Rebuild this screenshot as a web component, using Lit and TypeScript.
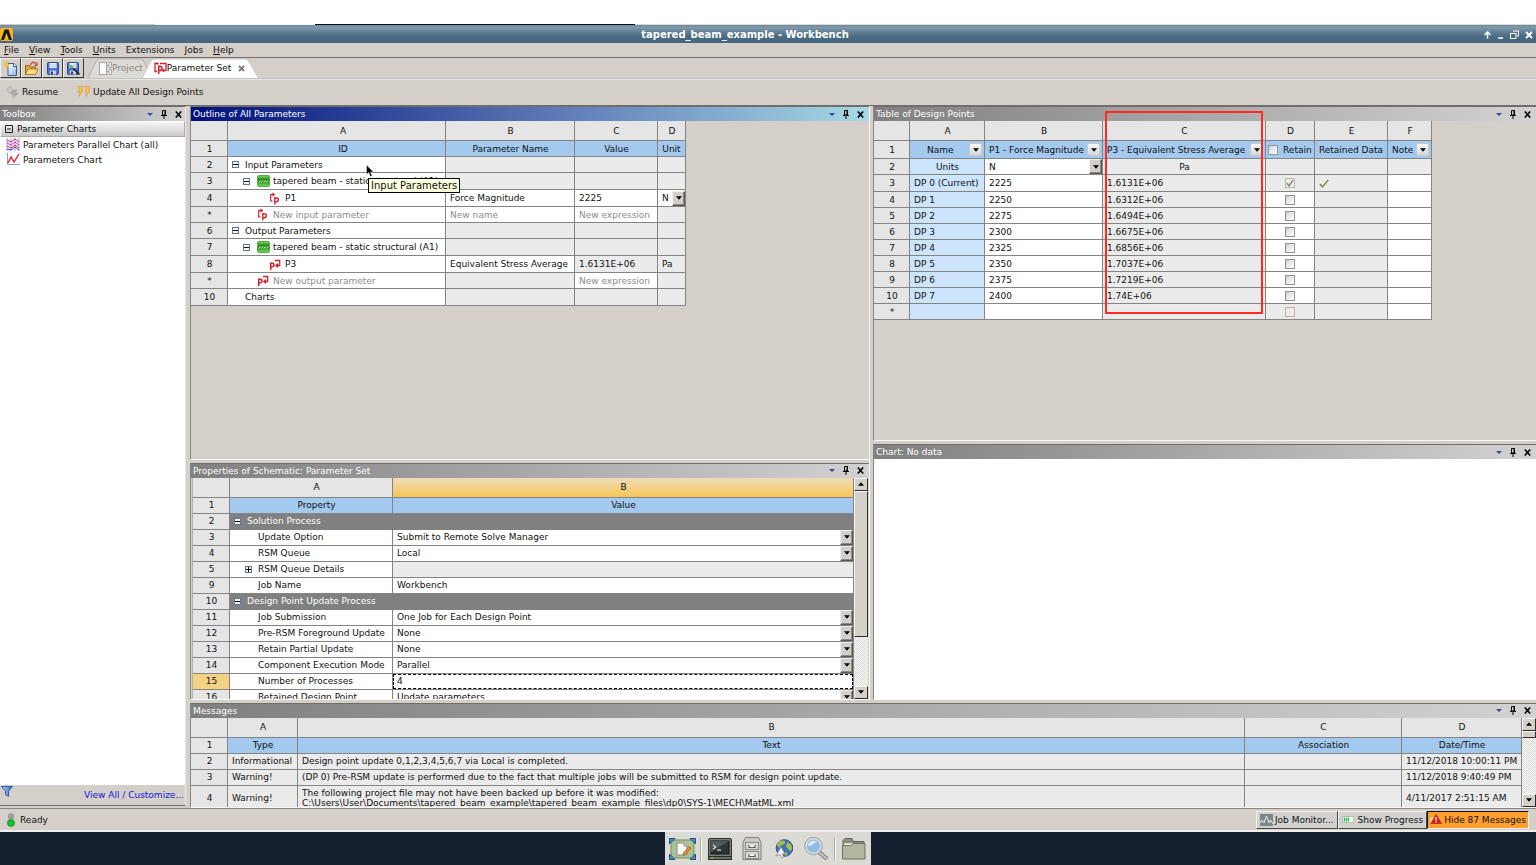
import { LitElement, html, svg, css, nothing, TemplateResult } from "lit";
import { customElement, state } from "lit/decorators.js";
import { classMap } from "lit/directives/class-map.js";

type Tpl = TemplateResult | string | typeof nothing;

const pic = (w: number, h: number, body: unknown, cls = "") =>
  html`<svg class=${cls} width=${w} height=${h} viewBox="0 0 ${w} ${h}" aria-hidden="true">${body}</svg>`;

const arrow = (up = false) =>
  pic(7, 4, up ? svg`<path d="M0 4 3.5 0 7 4z" fill="#000"/>` : svg`<path d="M0 0h7L3.5 4z" fill="#000"/>`);

const paramIn = pic(13, 13, svg`
  <path d="M4 2.500H1.700v6.500h2" fill="none" stroke="#d3202c" stroke-width="1.200"/>
  <path d="M3.500 .3v4.400L6.300 2.500z" fill="#d3202c"/>
  <path d="M5.800 5v7.500M6 6.200c4.500-1.500 4.500 4.300 0 3.600" fill="none" stroke="#d3202c" stroke-width="1.400"/>`);
const paramOut = pic(13, 13, svg`
  <path d="M1.700 4.500V12M2 5.500c4-1.500 4 4 0 3.500" fill="none" stroke="#d3202c" stroke-width="1.500"/>
  <path d="M6 2.500h4.700v5H8" fill="none" stroke="#d3202c" stroke-width="1.300"/>
  <path d="M9 5v5L5.800 7.500z" fill="#d3202c"/>`);
const paramSet = pic(13, 13, svg`
  <path d="M4 1.500H1v8h2M6 1.500h6v7H9" fill="none" stroke="#d3202c" stroke-width="1.300"/>
  <path d="M4.700 3.500V12M5 4.500c4-1.500 4 4.500 0 4" fill="none" stroke="#d3202c" stroke-width="1.500"/>
  <path d="M3 0v3l2-1.500zM10 6.500v4L7.500 8.500z" fill="#d3202c"/>`);
const systemIcon = pic(13, 12, svg`
  <defs><linearGradient id="sys" x2="0" y2="1"><stop stop-color="#7fdc62"/><stop offset=".35" stop-color="#2c8a22"/><stop offset=".6" stop-color="#2f9424"/><stop offset="1" stop-color="#7fe65c"/></linearGradient></defs>
  <rect x=".5" y=".5" width="12" height="11" rx="1.500" fill="url(#sys)" stroke="#4fae3e"/>
  <path d="M2 7.500l1.500-2M4.500 7.500l1.500-2M7 7.500l1.500-2M9.500 7.500l1.500-2" stroke="#e4f8dd" fill="none"/>`);

const pinIcon = pic(8, 9, svg`<path d="M2.500 .5h3v4.500h-3zM1 5.500h6M4 5.500V9M5 .5v5" fill="none" stroke="#000"/>`);
const closeIcon = pic(7, 7, svg`<path d="M.8 .5l5.400 6M6.200 .5l-5.400 6" stroke="#000" stroke-width="1.600"/>`);
const menuIcon = pic(6, 3, svg`<path d="M0 0h6L3 3z" fill="#2c4a94"/>`);

const logo = pic(13, 13, svg`
  <rect width="13" height="13" rx="2" fill="#f3b51f"/>
  <path d="M1 12 4.500 1.500h4L12 12H9L6.500 5 4 12z" fill="#1c1a16"/>`);

const newIcon = pic(15, 15, svg`
  <defs><linearGradient id="pg" x2="1" y2="1"><stop stop-color="#fff"/><stop offset="1" stop-color="#8fb6e6"/></linearGradient></defs>
  <path d="M5 2.500h6l2.500 2.500v9.500H5z" fill="url(#pg)" stroke="#3f5f92"/>
  <path d="M10.500 2.500V5.500h3" fill="#fff" stroke="#3f5f92"/>
  <path d="M3.500 0v7M0 3.500h7M1.200 1.200l4.600 4.600M5.800 1.200 1.200 5.800" stroke="#f2c43a" stroke-width="1.200"/>`);
const openIcon = pic(15, 15, svg`
  <path d="M1.500 4.500h4l1 1.500h5v7.500h-10z" fill="#e2a53a" stroke="#9a6414"/>
  <path d="M4 8h10l-2.500 5.500h-10z" fill="#fbe08a" stroke="#b47a1c"/>
  <path d="M6.500 4c1-3 4-3.500 5.500-1.500" fill="none" stroke="#d8402a" stroke-width="1.300"/><path d="M13.500 1v4H10z" fill="#d8402a"/>`);
const diskBody = svg`
  <rect x="1.500" y="1.500" width="11" height="12" rx="1" fill="#4a70d0" stroke="#2c479a"/>
  <rect x="3.500" y="2" width="7" height="5" fill="#f2f5fb"/><path d="M4 4h6M4 5.500h6" stroke="#a9b7d6" stroke-width=".7"/>
  <rect x="4" y="9.500" width="6" height="4" fill="#c9d1e4"/><rect x="5" y="10.500" width="2" height="3" fill="#27407f"/>`;
const saveIcon = pic(14, 15, diskBody);
const saveAsIcon = pic(15, 15, svg`${diskBody}<path d="M5 5.500l8.500 8" stroke="#1d1d1d" stroke-width="1.600"/><path d="M4 4.500l3 3" stroke="#58b64c" stroke-width="2"/>`);
const projectIcon = pic(13, 13, svg`
  <rect x=".5" y=".5" width="7" height="12" fill="#fff" stroke="#a5a29d"/>
  <path d="M7.500 3.500h2M7.500 9.500h2M10 .5h2.500v5H10zM10 7.500h2.500v5H10z" fill="#fff" stroke="#a5a29d"/>`);
const resumeIcon = pic(13, 12, svg`
  <circle cx="4" cy="4" r="3" fill="#c9c6c1" stroke="#aba8a3" stroke-dasharray="1.500 1"/>
  <path d="M6 5l5-1-2 3h3l-5 5 1-4H5z" fill="#b5b2ad" stroke="#98958f" stroke-width=".6"/>`);
const updateIcon = pic(13, 11, svg`
  <path d="M1 .5h5L4.500 4H6L2 10.500 3 6H1L2.500 3z" fill="#fbc648" stroke="#d8933a" stroke-width=".6"/>
  <path d="M8 .5h5L11.500 4H13L9 10.500l1-4.500H8L9.500 3z" fill="#fbc648" stroke="#d8933a" stroke-width=".6"/>`);
const parallelIcon = pic(14, 13, svg`
  <path d="M1 0v13M5 0v13M9 0v13M13 0v13" stroke="#7f86d8" stroke-width=".8"/>
  <path d="M1 2l4 2 4-3 4 3" stroke="#e02a3c" fill="none"/><path d="M1 5l4 2 4-3 4 3" stroke="#c22ac0" fill="none"/>
  <path d="M1 8l4 2 4-3 4 3" stroke="#e02a3c" fill="none"/><path d="M1 11l4 1 4-3 4 3" stroke="#3340d8" fill="none"/>`);
const chartIcon = pic(14, 13, svg`
  <path d="M1.500 0v11.500H14" stroke="#8f9bb0" fill="none"/>
  <path d="M2 10l3-6 3 5 5-8" stroke="#e0202c" stroke-width="1.400" fill="none"/>`);
const filterIcon = pic(12, 11, svg`
  <defs><linearGradient id="fn" x2="1"><stop stop-color="#b7dcff"/><stop offset="1" stop-color="#2666c8"/></linearGradient></defs>
  <path d="M.5 .5h11L7.500 5v5.500L4.500 8.500V5z" fill="url(#fn)" stroke="#2a5fae"/>`);
const trafficIcon = pic(8, 14, svg`
  <circle cx="4" cy="3.500" r="3.200" fill="#a19e99"/><circle cx="4" cy="10" r="3.600" fill="#12bb2a" stroke="#0c8a1e" stroke-width=".6"/>`);
const monitorIcon = pic(13, 12, svg`
  <rect width="13" height="12" fill="#7b8787"/><path d="M0 9l2-3 2 3 2.500-7L9 9l1.500-3L13 10" fill="none" stroke="#e4f0ee"/>`);
const progressIcon = pic(12, 7, svg`
  <rect x=".5" y=".5" width="11" height="6" fill="#fff" stroke="#b9b9b9"/><path d="M2.500 1.500v4M4.500 1.500v4M6.500 1.500v4" stroke="#1fc43a" stroke-width="1.400"/>`);
const warnIcon = pic(12, 12, svg`
  <path d="M0 3h8v6H4l-2 2.500V9H0z" fill="#f6e08a" stroke="#c79a3a" stroke-width=".6"/>
  <path d="M6 .5 11.500 9.500H1z" fill="#d92020" stroke="#9c1010" stroke-width=".6"/><path d="M6 3v3.500M6 7.200v1.300" stroke="#fff" stroke-width="1.300"/>`);
const tickIcon = pic(10, 9, svg`<path d="M.8 5 3.500 7.800 9.300 .8" fill="none" stroke="#5f8d2c" stroke-width="1.300"/>`);

const deskIcons = {
  desktop: pic(27, 22, svg`
    <rect x="2" y="2" width="23" height="18" rx="2" fill="#a9c293" stroke="#6f8a5c"/>
    <path d="M.5 5V.5H6L.5 6zM26.500 5V.5H21l5.500 5.500zM.5 17v4.500H6L.5 16zM26.500 17v4.500H21l5.500-5.500z" fill="#4f86c4" stroke="#23518c"/>
    <path d="M8 5h7l3 3v9H8z" fill="#fafafa" stroke="#8a8a86"/><path d="M15 5v3h3" fill="#ddd" stroke="#8a8a86"/>
    <path d="M14.500 15 20 8.500l2 1.500-5.500 6.500-2.500.5z" fill="#f08a24" stroke="#a8560e" stroke-width=".7"/>`),
  terminal: pic(24, 22, svg`
    <rect x=".5" y=".5" width="23" height="18" rx="1.500" fill="#7c7e79" stroke="#2f312e"/>
    <rect x="3" y="3" width="18" height="13" fill="#2e3634" stroke="#0f1211"/><path d="M3 3h18L3 14z" fill="#6b7672" opacity=".6"/>
    <path d="M5 7l3 2-3 2M9 12h4" stroke="#fff" fill="none"/><rect x=".5" y="18.500" width="23" height="3" fill="#6d6f6a" stroke="#2a2c28"/>
    <path d="M3 20h3" stroke="#73d216"/>`),
  cabinet: pic(20, 24, svg`
    <path d="M3.500 .5h13l2.500 5v17H1v-17z" fill="#c8c9c5" stroke="#81837d"/>
    <rect x="3.500" y="5.500" width="13" height="7" fill="#d8d9d5" stroke="#8a8c86"/><rect x="3.500" y="14.500" width="13" height="7" fill="#d8d9d5" stroke="#8a8c86"/>
    <path d="M7 8v2.500h6V8M7 17v2.500h6V17" fill="#f1f1ef" stroke="#5f615c" stroke-width="1.200"/>`),
  globe: pic(18, 20, svg`
    <circle cx="9.500" cy="9" r="8.300" fill="#3c74bc" stroke="#2a528c"/>
    <path d="M5 2c3-1.500 6 0 5 2S6 6 4.500 8 2 6 2 5.500 4 2.500 5 2zM12 3c3 1 5 3 5 6s-2 4-3 2-3-2-3-4 2-2 1-4zM10 13c2 0 3 1 2 3l-2 1z" fill="#a7bd4a"/>
    <path d="M1 17l5-9 4 7-2.500-.3 1 3.500-2 .8-1.400-3.500z" fill="#f4f4f4" stroke="#8a8a8a" stroke-width=".7"/>`),
  search: pic(25, 24, svg`
    <path d="M14 14l9 8" stroke="#77797a" stroke-width="4"/><path d="M15 15l7.500 6.500" stroke="#c9cbcc" stroke-width="2"/>
    <circle cx="9.500" cy="9" r="7.700" fill="#8fbde8" stroke="#d9dadb" stroke-width="2.200"/><circle cx="9.500" cy="9" r="8.800" fill="none" stroke="#85878a" stroke-width=".7"/>
    <path d="M4 9a5.500 5.500 0 0 1 9-4c-3 1-5 4-9 4z" fill="#d9ebfb"/>`),
  folder: pic(24, 22, svg`
    <path d="M1 20.500V2.500L3 .5h7l1.500 3H22v4" fill="#8b8c7a" stroke="#62635a"/>
    <path d="M2 5h20v6H2z" fill="#f2f2ee" stroke="#8b8c7a" stroke-width=".6"/>
    <path d="M.5 7.500h8.500l2-2h12v15.500H.5z" fill="#b4b69f" stroke="#6f705f"/>`),
};

interface OutlineRow {
  no: string; level: number; label: string; icon?: Tpl; toggle?: boolean; ghost?: boolean;
  name?: string; value?: string; unit?: string; tall?: boolean; editable?: string;
}

const OUTLINE: OutlineRow[] = [
  { no: "2", level: 0, label: "Input Parameters", toggle: true },
  { no: "3", level: 1, label: "tapered beam - static structural (A1)", toggle: true, icon: systemIcon, tall: true },
  { no: "4", level: 3, label: "P1", icon: paramIn, name: "Force Magnitude", value: "2225", unit: "N", tall: true, editable: "nv" },
  { no: "*", level: 2, label: "New input parameter", icon: paramIn, ghost: true, name: "New name", value: "New expression", editable: "nv" },
  { no: "6", level: 0, label: "Output Parameters", toggle: true },
  { no: "7", level: 1, label: "tapered beam - static structural (A1)", toggle: true, icon: systemIcon, tall: true },
  { no: "8", level: 3, label: "P3", icon: paramOut, name: "Equivalent Stress Average", value: "1.6131E+06", unit: "Pa", tall: true, editable: "n" },
  { no: "*", level: 2, label: "New output parameter", icon: paramOut, ghost: true, value: "New expression", editable: "v" },
  { no: "10", level: 0, label: "Charts", tall: true },
];

const POINTS = [
  ["3", "DP 0 (Current)", "2225", "1.6131E+06"],
  ["4", "DP 1", "2250", "1.6312E+06"],
  ["5", "DP 2", "2275", "1.6494E+06"],
  ["6", "DP 3", "2300", "1.6675E+06"],
  ["7", "DP 4", "2325", "1.6856E+06"],
  ["8", "DP 5", "2350", "1.7037E+06"],
  ["9", "DP 6", "2375", "1.7219E+06"],
  ["10", "DP 7", "2400", "1.74E+06"],
  ["*", "", "", ""],
];

type PropKind = "group" | "select" | "details" | "text" | "active";
const PROPS: [string, string, string, PropKind][] = [
  ["2", "Solution Process", "", "group"],
  ["3", "Update Option", "Submit to Remote Solve Manager", "select"],
  ["4", "RSM Queue", "Local", "select"],
  ["5", "RSM Queue Details", "", "details"],
  ["9", "Job Name", "Workbench", "text"],
  ["10", "Design Point Update Process", "", "group"],
  ["11", "Job Submission", "One Job for Each Design Point", "select"],
  ["12", "Pre-RSM Foreground Update", "None", "select"],
  ["13", "Retain Partial Update", "None", "select"],
  ["14", "Component Execution Mode", "Parallel", "select"],
  ["15", "Number of Processes", "4", "active"],
  ["16", "Retained Design Point", "Update parameters", "select"],
];

const MESSAGES: [string, string, string[], string][] = [
  ["2", "Informational", ["Design point update 0,1,2,3,4,5,6,7 via Local is completed."], "11/12/2018 10:00:11 PM"],
  ["3", "Warning!", ["(DP 0) Pre-RSM update is performed due to the fact that multiple jobs will be submitted to RSM for design point update."], "11/12/2018 9:40:49 PM"],
  ["4", "Warning!", ["The following project file may not have been backed up before it was modified:", "C:\\Users\\User\\Documents\\tapered_beam_example\\tapered_beam_example_files\\dp0\\SYS-1\\MECH\\MatML.xml"], "4/11/2017 2:51:15 AM"],
];

@customElement("app-root")
export class AppRoot extends LitElement {
  @state() private tab = "params";

  static styles = css`
    :host {
      display: flex; flex-direction: column; height: 100vh; overflow: hidden; background: #fff;
      font: 9px/12px "DejaVu Sans", sans-serif; color: #111;
      --face: #d4cfc9; --line: #848484; --dark: #716d68; --blue: #a3c9ef; --head: #e5e5e5; --off: #ebebeb;
    }
    * { box-sizing: border-box; }
    svg { display: block; flex: none; }
    button, input, select { font: inherit; color: inherit; margin: 0; padding: 0; border: 0; border-radius: 0; background: none; }
    button { display: flex; align-items: center; white-space: nowrap; }
    a { color: inherit; text-decoration: none; }

    .above { height: 24px; flex: none; }
    .edge { height: 1px; flex: none; display: flex; background: #d9d3c6; }
    .edge .a { flex: 155; background: #d3cab8; }
    .edge .b { flex: 160; background: #f4f4f4; }
    .edge .c { flex: 320; background: #0c0c0c; }
    .edge .d { flex: 901; background: #ddd8cd; }
    .titlebar {
      flex: none; height: 18px; display: grid; grid-template-columns: 20px 1fr 66px; align-items: center;
      padding-top: 1px; background: linear-gradient(#6f8b9c, #7d99aa 15%, #4b6b83 60%, #456680); color: #fff;
    }
    .titlebar h1 { margin: 0; font-size: 10px; line-height: 14px; font-weight: bold; text-align: center; }
    .win { display: flex; justify-content: flex-end; align-items: center; gap: 6px; padding-right: 3px; }
    .menubar { flex: none; height: 15px; display: flex; align-items: center; gap: 10px; padding-left: 4px; background: var(--face); border-bottom: 1px solid var(--dark); }
    .menubar u { text-decoration-thickness: 1px; text-underline-offset: 1px; }
    .toolbar { flex: none; height: 21px; display: flex; background: var(--face); border-bottom: 1px solid #c3c3c3; }
    .toolbar .tool { width: 21px; height: 20px; justify-content: center; border: 1px solid; border-color: #f4f2ef #3b3936 #3b3936 #f4f2ef; background: var(--face); }
    .tabs { display: flex; margin-left: 4px; height: 20px; align-self: flex-end; }
    .tab { position: relative; height: 20px; display: flex; align-items: center; padding: 0; color: #8a8782; }
    .tab .shape { position: absolute; inset: 0; width: 100%; height: 100%; }
    .tab .content { position: relative; display: flex; align-items: center; }
    .tab.project { padding: 0 13px 0 11px; margin-right: -14px; }
    .tab.params { padding: 0 13px 0 12px; color: #111; z-index: 1; }
    .tab.params .content svg:last-child { margin-left: 7px; }
    .actions { flex: none; height: 27px; display: flex; align-items: center; gap: 19px; padding: 0 0 2px 6px; background: var(--face); border-top: 1px solid #e8e6e2; border-bottom: 1px solid var(--dark); }
    .actions button { gap: 3px; }

    .work { flex: 1; min-height: 0; display: grid; grid-template-columns: 186px minmax(0, 1fr); gap: 4px; background: var(--face); }
    .toolbox { display: flex; flex-direction: column; min-height: 0; border-right: 1px solid #ece9e5; border-top: 1px solid var(--dark); margin-bottom: 2px; border-bottom: 1px solid var(--dark); }
    .toolbox .caption { padding-right: 3px; }
    .main { display: grid; grid-template-rows: minmax(0, 593fr) minmax(0, 105fr); gap: 3px; min-width: 0; min-height: 0; }
    .split { display: grid; grid-template-columns: minmax(0, 680fr) minmax(0, 663fr); gap: 3px; min-height: 0; }
    .stack { display: grid; gap: 3px; min-height: 0; min-width: 0; }
    .stack.mid { grid-template-rows: minmax(0, 353fr) minmax(0, 237fr); border-right: 1px solid #fbf9f6; }
    .stack.end { grid-template-rows: minmax(0, 335fr) minmax(0, 255fr); }

    .panel { position: relative; display: flex; flex-direction: column; min-width: 0; min-height: 0; border-left: 1px solid #8a857f; border-top: 1px solid var(--dark); border-bottom: 1px solid #fbf9f6; }
    .caption { flex: none; height: 14px; display: flex; align-items: center; padding: 0 5px 0 2px; background: linear-gradient(90deg, #808080, #d2d2d2); color: #fff; }
    .caption.active { background: linear-gradient(90deg, #00107c, #5772b3 50%, #a8d9e4); }
    .caption h2 { margin: 0; flex: 1; font: inherit; white-space: nowrap; overflow: hidden; }
    .caption button { margin-left: 7px; }
    .body { flex: 1; min-height: 0; display: flex; align-items: flex-start; overflow: hidden; }
    .body.white { background: #fff; }

    .group { flex: none; height: 16px; gap: 4px; padding: 0 4px; border: 1px solid #a9a9a9; border-top-color: #fff; border-left-color: #fff; background: linear-gradient(#f6f6f6, #c9c9c9); }
    .charts { flex: 1; background: #fff; margin: 0; padding: 0 0 0 6px; list-style: none; }
    .charts button { height: 15px; gap: 3px; }
    .foot { height: 20px; display: flex; justify-content: space-between; padding: 0 1px 0 1px; color: #1414e0; }
    .foot a { align-self: center; }
    .foot button { align-items: flex-start; padding-top: 1px; }

    table { border-collapse: separate; border-spacing: 0; table-layout: fixed; flex: none; }
    th, td { height: 16px; padding: 0 3px 0 4px; border: solid var(--line); border-width: 0 1px 1px 0; font-weight: normal; text-align: left; white-space: nowrap; overflow: hidden; background: #fff; vertical-align: middle; line-height: 12px; }
    td.flush, th.flush { padding: 0; }
    .letters th { height: 20px; text-align: center; background: var(--head); }
    .no { background: var(--head); text-align: center; }
    .titles th { text-align: center; background: var(--blue); }
    .titles th.no { background: var(--head); }
    .outline .letters th:nth-child(2), .outline .titles th:nth-child(2) { padding-left: 16px; }
    .properties .letters th:nth-child(2), .properties .titles th:nth-child(2) { padding-left: 14px; }
    .off { background: var(--off); }
    .name { background: #cce4fc; }
    .center { text-align: center; }
    .tall > * { height: 17px; }
    .deep > * { height: 18px; }
    .ghost, ::placeholder { color: #8c8c8c; opacity: 1; }
    .cell { display: block; width: 100%; height: 14px; padding: 0 0 0 4px; outline: none; }
    .tree { display: flex; align-items: center; height: 14px; padding-left: 4px; }
    .tree .icon { margin-right: 3px; }
    .l0 .lead { width: 13px; } .l1 .lead { width: 14px; margin-left: 11px; } .l2 .lead { width: 1px; margin-left: 24px; } .l3 .lead { width: 1px; margin-left: 36px; }
    .lead { display: flex; flex: none; }
    .box { width: 7px; height: 7px; border: 1px solid #5f7796; background: #f4f6f9; justify-content: center; }
    .drop { display: grid; grid-template-columns: minmax(0, 1fr) 13px; height: 15px; }
    .drop select { grid-area: 1 / 1 / 2 / 3; appearance: none; padding-left: 4px; outline: none; }
    .drop .knob { grid-area: 1 / 2; pointer-events: none; }
    .knob { display: flex; align-items: center; justify-content: center; border: 1px solid; border-color: #f1efec #5b5855 #5b5855 #f1efec; background: var(--face); box-shadow: inset -1px -1px #8e8b87; }
    .knob svg, .filter svg, .scroll svg { width: 6px; }
    .filter { display: flex; align-items: center; height: 17px; justify-content: space-between; padding: 0 2px 0 4px; }
    .filter.named { padding-left: 17px; }
    .filter button { width: 13px; height: 13px; justify-content: center; border: 1px solid #c9c9c9; border-radius: 2px; background: linear-gradient(#fafafa, #d6d6d6); }
    .filter label { display: flex; align-items: center; gap: 5px; }
    .filter.check { padding-left: 2px; }
    .tick { appearance: none; display: block; width: 10px; height: 10px; margin: 0 auto; border: 1px solid #8f959c; background: linear-gradient(135deg, #cfd3d8, #fff); }
    .filter .tick { margin: 0; }
    .tick:disabled { border-color: #bdb6a8; background: #efece4; }
    .ticked { display: grid; justify-content: center; }
    .ticked > * { grid-area: 1 / 1; }
    .ticked svg { margin: 1px; }

    .properties table { flex: 1; margin-left: 1px; border-left: 1px solid #b5b2ae; }
    .properties .letters .hot { background: linear-gradient(#ebddb8, #f9c557); }
    .properties .band { background: #808080; color: #fff; border-right-color: #808080; border-bottom-color: #808080; }
    .properties .no.hot { background: #f5d283; }
    .prop { padding-left: 28px; }
    .prop.open { padding-left: 15px; }
    .prop .tree, .band .tree { padding-left: 0; }
    .prop .lead, .band .lead { width: 13px; }
    .active-cell .cell { height: 15px; border: 1px dashed #000; padding-left: 3px; }

    .scroll { flex: none; align-self: stretch; width: 14px; display: flex; flex-direction: column; background: repeating-conic-gradient(#fff 0 25%, #dad6d1 0 50%) 0 0 / 2px 2px; }
    .scroll button, .thumb { border: 1px solid; border-color: #fbfaf8 #2e2c2a #2e2c2a #fbfaf8; background: var(--face); }
    .scroll button { height: 13px; justify-content: center; }
    .track { flex: 1; min-height: 0; }
    .properties .thumb { height: 75%; }
    .messages .thumb { height: 7px; }
    .scroll.right { margin-right: 1px; }

    .messages table { flex: 1; }
    .messages td { background: var(--off); }
    .messages td.no { background: var(--head); }
    .messages .pair > td { height: 26px; line-height: 10px; }
    .messages p { margin: 0; }

    .mark { position: absolute; left: 231px; top: 4px; width: 158px; height: 203px; border: 2px solid #ff2a22; pointer-events: none; }
    .cursor { position: absolute; left: 175px; top: 58px; }
    .tip { position: absolute; left: 177px; top: 71px; height: 15px; padding: 0 2px; border: 1px solid #000; background: #ffffe1; white-space: nowrap; font-size: 10px; line-height: 13px; }

    .status { flex: none; height: 24px; display: flex; align-items: center; background: var(--face); border-top: 1px solid #8a857f; border-bottom: 2px solid #efedea; padding: 0 7px 0 7px; }
    .status span { flex: 1; padding-left: 5px; }
    .status button { height: 18px; padding: 0 3px; gap: 4px; border: 1px solid; border-color: #f4f2ef #4a4845 #4a4845 #f4f2ef; background: #d3d1cf; }
    .status button.tight { gap: 2px; }
    .status button.on { gap: 2px; padding: 0 2px; background: #ff9f2e; border-color: #111 #f4f2ef #f4f2ef #111; }
    .desktop { flex: none; height: 33px; display: flex; justify-content: center; background: #152131; }
    .dock { display: flex; align-items: center; background: #dcdad5; padding: 0 1px; }
    .dock button { width: 32px; height: 32px; justify-content: center; }
    .dock i { width: 2px; height: 24px; margin: 0 2px; border-left: 1px solid #aaa8a3; border-right: 1px solid #fff; }
  `;

  private tools(name: string) {
    return html`
      <button aria-label="${name} menu">${menuIcon}</button>
      <button aria-label="Pin ${name}">${pinIcon}</button>
      <button aria-label="Close ${name}">${closeIcon}</button>`;
  }

  private caption(name: string, active = false) {
    return html`<header class=${classMap({ caption: true, active })}><h2>${name}</h2>${this.tools(name)}</header>`;
  }

  private box(label: string, plus = false) {
    return html`<button class="box" aria-label="Toggle ${label}">
      ${pic(5, 5, plus ? svg`<path d="M0 2.500h5M2.500 0v5" stroke="#111"/>` : svg`<path d="M0 2.500h5" stroke="#111"/>`)}
    </button>`;
  }

  private drop(label: string, value: string) {
    return html`<div class="drop">
      <select aria-label=${label}><option>${value}</option></select>
      <span class="knob">${arrow()}</span>
    </div>`;
  }

  private scroll(name: string, right = false) {
    return html`<div class=${classMap({ scroll: true, right })}>
      <button aria-label="Scroll ${name} up">${arrow(true)}</button>
      <div class="track"><div class="thumb"></div></div>
      <button aria-label="Scroll ${name} down">${arrow()}</button>
    </div>`;
  }

  private letters(list: string[], hot = "") {
    return html`<tr class="letters"><th></th>${list.map((l) => html`<th class=${l === hot ? "hot" : ""}>${l}</th>`)}</tr>`;
  }

  private cols(widths: number[]) {
    return html`<colgroup>${widths.map((w) => (w ? html`<col width=${w} />` : html`<col />`))}</colgroup>`;
  }

  private field(row: OutlineRow, text: string | undefined, on: boolean, label: string) {
    if (!on) return html`<td class="off">${text ?? ""}</td>`;
    return html`<td class="flush">${row.ghost
      ? html`<input class="cell" placeholder=${text ?? ""} aria-label="${label} of ${row.label}" />`
      : html`<input class="cell" .value=${text ?? ""} aria-label="${label} of ${row.label}" />`}</td>`;
  }

  private outline() {
    return html`<section class="panel">
      ${this.caption("Outline of All Parameters", true)}
      <div class="body outline">
        <table width="495">
          ${this.cols([37, 218, 129, 83, 28])}
          <tbody>
            ${this.letters(["A", "B", "C", "D"])}
            <tr class="titles"><th class="no">1</th><th>ID</th><th>Parameter Name</th><th>Value</th><th class="flush">Unit</th></tr>
            ${OUTLINE.map((r) => html`<tr class=${r.tall ? "tall" : ""}>
              <td class="no">${r.no}</td>
              <td class="flush"><div class="tree l${r.level}">
                <span class="lead">${r.toggle ? this.box(r.label) : nothing}</span>
                ${r.icon ? html`<span class="icon">${r.icon}</span>` : nothing}
                <span class=${r.ghost ? "ghost" : ""}>${r.label}</span>
              </div></td>
              ${this.field(r, r.name, !!r.editable?.includes("n"), "Name")}
              ${this.field(r, r.value, !!r.editable?.includes("v"), "Value")}
              ${r.unit === "N" ? html`<td class="flush">${this.drop("Unit of P1", "N")}</td>` : html`<td class="off">${r.unit ?? ""}</td>`}
            </tr>`)}
          </tbody>
        </table>
      </div>
      <div class="tip" role="tooltip">Input Parameters</div>
      ${pic(8, 12, svg`<path d="M.5 0v9.500l2.200-2 1.600 4 1.700-.7-1.700-3.800H7.500z" fill="#000" stroke="#fff" stroke-width=".4"/>`, "cursor")}
    </section>`;
  }

  private points() {
    const filter = (label: string) => html`<button aria-label="Filter ${label}">${arrow()}</button>`;
    return html`<section class="panel">
      ${this.caption("Table of Design Points")}
      <div class="body">
        <table width="558">
          ${this.cols([36, 75, 118, 163, 49, 73, 44])}
          <tbody>
            ${this.letters(["A", "B", "C", "D", "E", "F"])}
            <tr class="titles deep">
              <th class="no">1</th>
              <th class="flush"><div class="filter named">Name ${filter("Name")}</div></th>
              <th class="flush"><div class="filter">P1 - Force Magnitude ${filter("P1")}</div></th>
              <th class="flush"><div class="filter">P3 - Equivalent Stress Average ${filter("P3")}</div></th>
              <th class="flush"><div class="filter check"><label><input class="tick" type="checkbox" />Retain</label></div></th>
              <th class="flush">Retained Data</th>
              <th class="flush"><div class="filter">Note ${filter("Note")}</div></th>
            </tr>
            <tr><td class="no">2</td><td class="name center">Units</td><td class="flush">${this.drop("Unit of P1", "N")}</td><td class="off center">Pa</td><td class="off"></td><td class="off"></td><td class="off"></td></tr>
            ${POINTS.map(([no, name, force, stress], i) => html`<tr class=${i === 0 ? "tall" : ""}>
              <td class="no">${no}</td><td class="name">${name}</td>
              <td class="flush"><input class="cell" .value=${force} aria-label="P1 of ${name || "new design point"}" /></td>
              <td class="off">${stress}</td>
              <td class=${no === "3" || no === "*" ? "off flush" : "flush"}>
                <div class="ticked">
                  <input class="tick" type="checkbox" ?checked=${i === 0} ?disabled=${no === "3" || no === "*"} aria-label="Retain ${name || "new design point"}" />
                  ${i === 0 ? pic(8, 8, svg`<path d="M1 4l2 3 4-6" fill="none" stroke="#8f8b82" stroke-width="1.500"/>`) : nothing}
                </div>
              </td>
              <td class="off">${i === 0 ? tickIcon : nothing}</td><td></td>
            </tr>`)}
          </tbody>
        </table>
      </div>
      <div class="mark"></div>
    </section>`;
  }

  private properties() {
    return html`<section class="panel">
      ${this.caption("Properties of Schematic: Parameter Set")}
      <div class="body properties">
        <table>
          ${this.cols([37, 163, 0])}
          <tbody>
            ${this.letters(["A", "B"], "B")}
            <tr class="titles"><th class="no">1</th><th>Property</th><th>Value</th></tr>
            ${PROPS.map(([no, label, value, kind]) => kind === "group"
              ? html`<tr><td class="no">${no}</td><td class="band" colspan="2"><div class="tree"><span class="lead">${this.box(label)}</span>${label}</div></td></tr>`
              : html`<tr>
                  <td class="no ${kind === "active" ? "hot" : ""}">${no}</td>
                  ${kind === "details"
                    ? html`<td class="prop open"><div class="tree"><span class="lead">${this.box(label, true)}</span>${label}</div></td><td class="off"></td>`
                    : html`<td class="prop">${label}</td>
                        <td class="flush ${kind === "active" ? "active-cell" : ""}">${kind === "select"
                          ? this.drop(label, value)
                          : html`<input class="cell" .value=${value} aria-label=${label} />`}</td>`}
                </tr>`)}
          </tbody>
        </table>
        ${this.scroll("properties", true)}
      </div>
    </section>`;
  }

  private messages() {
    return html`<section class="panel">
      ${this.caption("Messages")}
      <div class="body messages">
        <table>
          ${this.cols([37, 70, 0, 157, 120])}
          <tbody>
            ${this.letters(["A", "B", "C", "D"])}
            <tr class="titles"><th class="no">1</th><th>Type</th><th>Text</th><th>Association</th><th>Date/Time</th></tr>
            ${MESSAGES.map(([no, type, lines, date]) => html`<tr class=${lines.length > 1 ? "pair" : ""}>
              <td class="no">${no}</td><td>${type}</td><td>${lines.map((l) => html`<p>${l}</p>`)}</td><td></td><td>${date}</td>
            </tr>`)}
          </tbody>
        </table>
        ${this.scroll("messages")}
      </div>
    </section>`;
  }

  render() {
    const menus = ["File", "View", "Tools", "Units", "Extensions", "Jobs", "Help"];
    return html`
      <div class="above"></div>
      <div class="edge"><i class="a"></i><i class="b"></i><i class="c"></i><i class="d"></i></div>
      <header class="titlebar">
        ${logo}
        <h1>tapered_beam_example - Workbench</h1>
        <div class="win">
          <button aria-label="Raise">${pic(7, 8, svg`<path d="M3.500 7.500V1M.5 4l3-3 3 3" fill="none" stroke="#fff" stroke-width="1.500"/>`)}</button>
          <button aria-label="Minimize">${pic(7, 8, svg`<path d="M1 7h5" stroke="#fff" stroke-width="1.500"/>`)}</button>
          <button aria-label="Restore">${pic(9, 9, svg`<path d="M.5 3.500h5.500v5H.5zM3 1h5.500v5H7" fill="none" stroke="#fff"/>`)}</button>
          <button aria-label="Close">${pic(8, 8, svg`<path d="M1 1l6 6M7 1 1 7" stroke="#fff" stroke-width="1.800"/>`)}</button>
        </div>
      </header>
      <nav class="menubar">${menus.map((m) => m === "Extensions"
        ? html`<a href="#">${m}</a>`
        : html`<a href="#"><u>${m[0]}</u>${m.slice(1)}</a>`)}</nav>
      <div class="toolbar">
        <button class="tool" aria-label="New">${newIcon}</button>
        <button class="tool" aria-label="Open">${openIcon}</button>
        <button class="tool" aria-label="Save">${saveIcon}</button>
        <button class="tool" aria-label="Save As">${saveAsIcon}</button>
        <div class="tabs" role="tablist">
          <button class="tab project" role="tab" aria-selected=${this.tab === "project"} @click=${() => (this.tab = "project")}>
            <svg class="shape" viewBox="0 0 70 20" preserveAspectRatio="none" aria-hidden="true"><path d="M0 20 8 4Q9 1 12 1H54Q57 1 58 4L66 20" fill="#dedad5" stroke="#b3afaa"/></svg>
            <span class="content">${projectIcon}Project</span>
          </button>
          <button class="tab params" role="tab" aria-selected=${this.tab === "params"} @click=${() => (this.tab = "params")}>
            <svg class="shape" viewBox="0 0 116 20" preserveAspectRatio="none" aria-hidden="true"><path d="M0 20 8 4Q9 1 12 1H103Q106 1 107 4L116 20" fill="#fdfdfd" stroke="#c9c6c1"/></svg>
            <span class="content">${paramSet}Parameter Set${pic(7, 7, svg`<path d="M1 1l5 5M6 1 1 6" stroke="#7a7a78" stroke-width="1.800"/>`)}</span>
          </button>
        </div>
      </div>
      <div class="actions">
        <button>${resumeIcon}Resume</button>
        <button>${updateIcon}Update All Design Points</button>
      </div>
      <main class="work">
        <aside class="toolbox">
          ${this.caption("Toolbox")}
          <button class="group">${pic(8, 8, svg`<path d="M.5 .5h7v7h-7zM2 4h4" fill="none" stroke="#222"/>`)}Parameter Charts</button>
          <ul class="charts">
            <li><button>${parallelIcon}Parameters Parallel Chart (all)</button></li>
            <li><button>${chartIcon}Parameters Chart</button></li>
          </ul>
          <div class="foot"><button aria-label="Filter toolbox">${filterIcon}</button><a href="#">View All / Customize...</a></div>
        </aside>
        <div class="main">
          <div class="split">
            <div class="stack mid">${this.outline()}${this.properties()}</div>
            <div class="stack end">
              ${this.points()}
              <section class="panel">${this.caption("Chart: No data")}<div class="body white"></div></section>
            </div>
          </div>
          ${this.messages()}
        </div>
      </main>
      <footer class="status">
        ${trafficIcon}<span>Ready</span>
        <button class="tight">${monitorIcon}Job Monitor...</button>
        <button>${progressIcon}Show Progress</button>
        <button class="on">${warnIcon}Hide 87 Messages</button>
      </footer>
      <div class="desktop"><div class="dock">
        <button aria-label="Show desktop">${deskIcons.desktop}</button><i></i>
        <button aria-label="Terminal">${deskIcons.terminal}</button>
        <button aria-label="File manager">${deskIcons.cabinet}</button>
        <button aria-label="Web browser">${deskIcons.globe}</button>
        <button aria-label="Search">${deskIcons.search}</button><i></i>
        <button aria-label="Folder">${deskIcons.folder}</button>
      </div></div>
    `;
  }
}
